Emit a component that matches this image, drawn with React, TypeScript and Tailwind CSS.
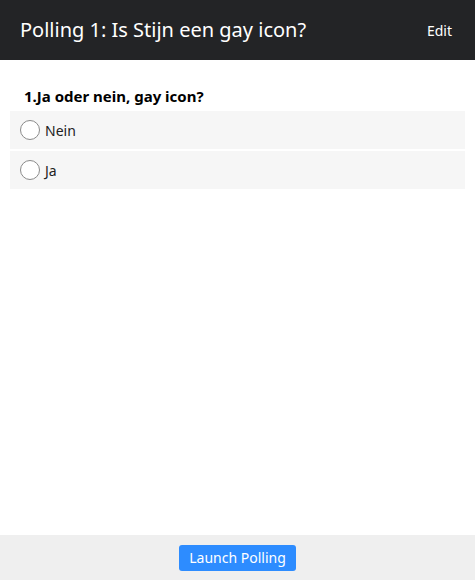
import { useState } from 'react';

const options = ['Nein', 'Ja'];

function Radio({ checked }: { checked: boolean }) {
  return (
    <span className="flex h-[20px] w-[20px] flex-shrink-0 items-center justify-center rounded-full border border-[#8a8a8a] bg-white">
      {checked && <span className="h-[10px] w-[10px] rounded-full bg-[#2d8cff]" />}
    </span>
  );
}

export default function App() {
  const [selected, setSelected] = useState<number | null>(null);

  return (
    <div
      className="flex h-[580px] w-[475px] flex-col bg-white"
      style={{ fontFamily: '"Noto Sans", "Open Sans", sans-serif' }}
    >
      {/* Header */}
      <div className="flex h-[60px] flex-shrink-0 items-center justify-between bg-[#232426] pl-[20px] pr-[23px]">
        <span className="text-[20px] text-white">Polling 1: Is Stijn een gay icon?</span>
        <button className="text-[14px] text-white">Edit</button>
      </div>

      {/* Question */}
      <div className="flex-1 px-[10px] pt-[26px]">
        <div className="mb-[5px] pl-[14px] text-[15px] font-bold leading-[20px] text-black">
          1.Ja oder nein, gay icon?
        </div>
        <div className="flex flex-col gap-[2px]">
          {options.map((opt, i) => (
            <label
              key={opt}
              className="flex h-[38px] cursor-pointer items-center gap-[5px] bg-[#f6f6f6] pl-[10px]"
              onClick={() => setSelected(i)}
            >
              <Radio checked={selected === i} />
              <span className="text-[14px] text-[#222]">{opt}</span>
            </label>
          ))}
        </div>
      </div>

      {/* Footer */}
      <div className="flex h-[45px] flex-shrink-0 items-center justify-center bg-[#efefef]">
        <button className="h-[26px] rounded-[3px] bg-[#2d8cff] px-[10px] text-[14px] text-white">
          Launch Polling
        </button>
      </div>
    </div>
  );
}
